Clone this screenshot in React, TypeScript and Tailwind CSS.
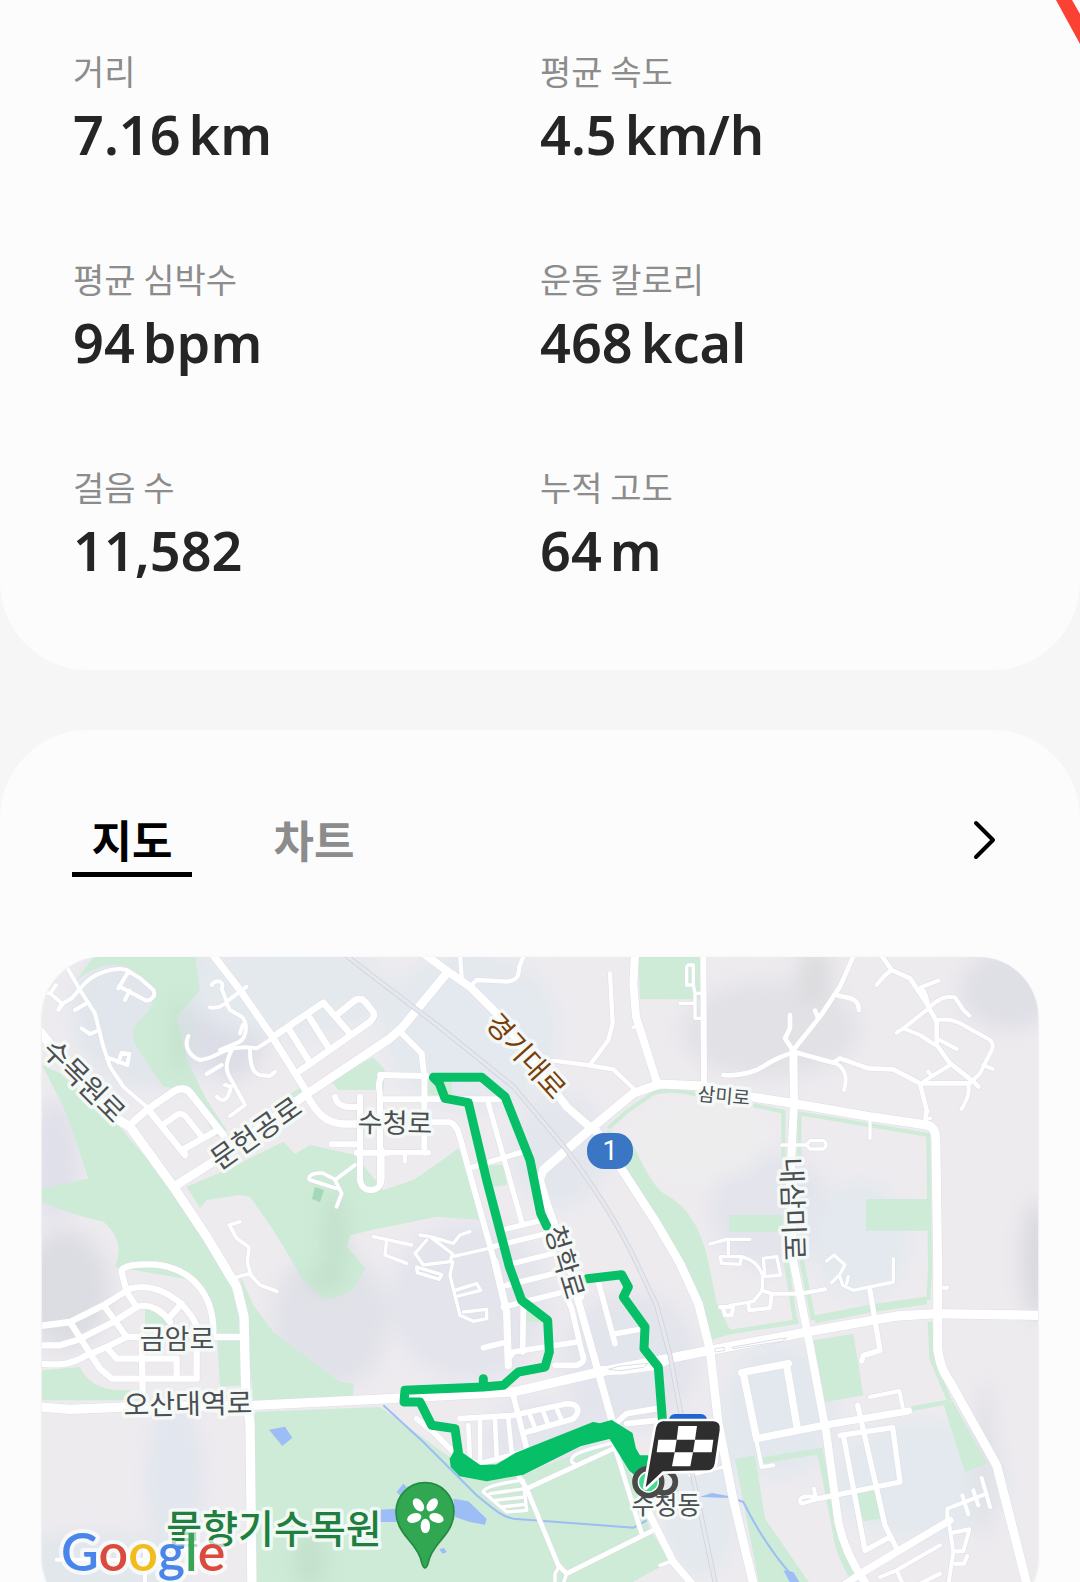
const stats = [
    { id: 1, label: "거리", value: "7.16", unit: "km" },
    { id: 2, label: "평균 속도", value: "4.5", unit: "km/h" },
    { id: 3, label: "평균 심박수", value: "94", unit: "bpm" },
    { id: 4, label: "운동 칼로리", value: "468", unit: "kcal" },
    { id: 5, label: "걸음 수", value: "11,582", unit: "" },
    { id: 6, label: "누적 고도", value: "64", unit: "m" },
]

// each tile has its own origin on the map, paths are in thirds of a pixel
const tiles = [
    {
        id: "nw",
        place: "translate(40 950) scale(0.33333)",
        greens: [
            "M110 90L160 21H465L480 120L410 200L440 330L500 450L560 540L530 560L440 420L370 410L290 290C270 250 280 220 320 190C360 140 340 90 260 50C200 30 150 60 110 90Z",
            "M6 345L60 370L230 520L410 730L500 880L570 1010L225 950C245 900 240 860 190 815L110 795L6 755V718L145 685L110 580L70 470Z",
            "M440 710L560 660L730 575L765 612L810 585L945 615L1030 720L1120 690L1200 635L1255 595L1300 700L1325 810L1190 800L1020 835L930 855L920 890L975 955L950 1000C920 1040 880 1050 850 1042L790 990L760 940L700 840L630 740L600 735L500 750L480 775Z",
            "M1000 322L1035 360L1030 420H895L870 390Z",
            "M745 435L795 405L805 440L770 455Z",
        ],
        strips: [],
        roads: [
            { w: 28, d: "M0 245L60 320L220 500L270 530L400 710L500 860L560 960L590 1010L612 1100L617 1320L630 1420L636 1920" },
            { w: 26, d: "M410 705L520 635L800 432L1050 265L1085 235L1220 70" },
            { w: 22, d: "M515 10L600 120L690 250L800 425M280 515L320 480L400 425C420 412 440 415 450 428L550 555M800 435C830 490 860 520 910 522H950" },
            { w: 20, d: "M700 260L850 158L925 245M780 362L990 215C1005 200 1005 190 995 180L975 155C965 145 950 145 940 155L890 195M745 235L805 330M810 205L870 300M330 485L435 615L430 598L525 545" },
            { w: 18, d: "M375 520L415 492C430 490 440 500 445 510L485 560M885 440C890 465 910 475 960 470V440M875 583H950M960 450V690C965 730 1020 730 1025 690V600M950 608H1045" },
            { w: 12, d: "M80 50L120 120L165 190L190 290L210 350L250 410L320 470M6 130H30L65 160L55 180L70 160L95 145L130 105C160 70 220 50 260 60L300 85L340 120C350 140 330 155 315 150L240 110M30 130L48 105M265 65L235 115M268 122L255 150M105 180L140 160M125 235L150 252L178 240M210 325L235 335L262 345L268 312L245 308L235 338" },
            { w: 12, d: "M515 105C530 85 555 95 545 115L560 155L620 110M510 172C540 180 550 160 560 160L570 180L605 200C625 220 620 260 600 275L540 300M608 225L600 250M445 258C430 290 450 320 480 330C520 325 530 310 560 300C590 290 620 290 650 295L690 270M545 345L500 372M575 300C550 350 560 370 580 400L615 465L570 498M530 440C550 460 565 450 573 410L555 405M630 300C630 350 640 370 660 375L690 378L705 365" },
            { w: 11, d: "M945 645L885 690L905 730L890 770M888 715L810 690C800 680 820 665 850 670L888 690M600 815L568 825L590 865L627 892L622 936L632 975L660 1005L710 1024M632 970L590 981" },
        ],
    },
    {
        id: "n",
        place: "translate(380 950) scale(0.33333)",
        greens: [
            "M775 21H965V148H780Z",
            "M325 645H370L380 705L340 710Z",
            "M145 385H215V435H145Z",
            "M680 540L750 570C780 620 810 700 850 730C930 770 970 850 990 960L1010 1060L1045 1130L1060 1150L995 1170L950 1050L830 820L720 640Z",
        ],
        strips: [{ w: 12, d: "M685 535L740 485L820 430C860 415 920 425 960 435" }],
        roads: [
            { w: 26, d: "M640 530L720 650L830 820L900 940L955 1060L990 1200L1015 1420L1060 1650L1120 1900" },
            { w: 24, d: "M765 10L760 100L768 200L800 300L830 395M130 10L205 65L270 110L350 190L560 470L640 540M490 660L480 690L500 760L540 870L600 1040" },
            { w: 18, d: "M970 10L972 400M60 245L125 310L133 380V608M0 375L140 378M0 448H360M150 517H210C230 525 235 540 250 600L350 960M5 380C-10 400 0 420 0 440V700" },
            { w: 16, d: "M275 652L430 605M325 460L425 815M365 840L510 805M340 890L500 850M400 940L520 910M0 608H145" },
            { w: 13, d: "M240 10L245 80M270 110L290 90L380 95C420 90 415 70 418 50L430 20M690 70L698 220L685 270L630 345M520 332L620 345L700 358L765 420M75 610V635" },
            { w: 10, d: "M925 45H940V105H920V50M940 105L945 130H965M945 130V160H900M945 160V205H965M-20 860L95 885M20 870L15 915L80 940M120 855L150 860L220 880L240 855L270 845M140 870L105 910L130 945L210 935L218 912L150 860M218 920L350 890M775 225L760 232" },
        ],
    },
    {
        id: "ne",
        place: "translate(710 950) scale(0.33333)",
        greens: ["M468 747H655V842H468Z", "M57 795H217V845H57Z"],
        strips: [
            { w: 12, d: "M130 465L220 485V620M268 620V490L655 555L660 960L655 1050" },
            { w: 14, d: "M228 930L255 1110M275 930L310 1110" },
        ],
        roads: [
            { w: 27, d: "M-500 660L-350 530L-230 430L-150 402L-20 408L120 440L260 462L480 500L650 525C680 532 678 560 678 600L683 936V1196C690 1246 700 1266 720 1296L860 1546L950 1900" },
            { w: 24, d: "M250 305L252 460L240 700L250 936L290 1136L350 1456L385 1716C400 1786 430 1850 475 1910" },
            { w: 14, d: "M250 300L330 200L390 110L432 15M245 295L225 265L240 235V195M315 182L325 205M385 137C430 145 445 150 447 180M245 310C200 320 170 345 140 360C100 375 70 378 40 375M250 305L370 338L390 325L475 355L550 358L630 400H775M630 400L650 480L645 520M510 10L545 60L600 85L650 160L680 215V285L720 340L790 395L805 410" },
            { w: 12, d: "M370 338C410 350 412 390 402 420M545 60C515 80 505 100 500 105M685 92L632 112C650 130 655 160 655 180M560 248L580 235L650 180C690 140 710 138 735 142L760 180L778 197M580 235L630 255L675 285M685 268L740 297M680 210C710 205 730 210 750 220L840 270C850 280 850 290 845 300L810 370L775 405C780 430 770 450 755 477M820 345L848 357M720 345L640 395M655 365L665 378" },
            { w: 10, d: "M480 505V565M215 585H290L300 572H340C352 580 350 590 340 597H300L290 585M645 485H655M645 505H662M0 882L50 868H120M55 870V915M30 920H95L90 943L35 940ZM95 920C130 930 150 950 157 975V1021L130 1054L60 1066M160 925L200 920L212 975L165 980ZM350 933L372 915L405 945L388 975L398 1006L430 1021L550 996V926M365 998L388 975M415 980L410 1000" },
        ],
    },
    {
        id: "sw",
        place: "translate(40 1262) scale(0.33333)",
        greens: [
            "M230 0H560L600 150L605 370L540 375L530 200C500 60 420 10 350 5Z",
            "M6 325L120 315C140 360 180 380 230 385H300V415H6Z",
            "M600 40L640 130L700 210L900 360L940 365V405L640 415L620 200Z",
            "M645 450L1020 435L1250 600L1320 650L1440 640L1720 535L1780 650L1830 800L1890 900L1740 980H645Z",
            "M315 140H360L400 190H315Z",
        ],
        strips: [],
        roads: [
            { w: 28, d: "M0 435L90 442L260 435L640 430L1050 410L1420 390L1670 332L2010 265L2300 210L2570 162L2690 155L3000 160" },
            { w: 19, d: "M0 192L90 180L190 130L270 80C350 60 430 110 470 190M260 90L245 30C240 10 300 5 350 8C450 20 520 90 520 210M0 250H60L110 235L220 180L290 135C330 120 370 150 390 180M0 305C60 310 90 310 140 280L200 255L260 225H310M90 180L180 320L215 350H470V270M195 135L260 225M260 90L290 135M205 262L230 290H410V350M305 220L308 400M385 170L425 125M530 225H610" },
            { w: 12, d: "M50 893H330M315 840V960" },
        ],
    },
    {
        id: "s",
        place: "translate(380 1262) scale(0.33333)",
        greens: ["M435 140L500 175V180L440 180Z"],
        strips: [],
        roads: [
            { w: 22, d: "M345 0L380 150L385 310M590 100L655 330L700 490M800 740L880 900L940 970" },
            { w: 26, d: "M650 325L720 325L830 310L870 290" },
            { w: 17, d: "M550 80L575 140L610 290M310 257L380 240M370 135L560 88M380 70L540 30M390 285L400 270L590 240M430 130L428 270M525 310H590C615 300 615 290 605 270M655 60L705 245M705 215L790 200M400 400L440 560M240 470L400 460L560 425C600 425 600 450 580 470L440 510M240 590L300 605L430 570M700 490L740 455L830 440M740 485L830 475M110 470L160 510L240 590" },
            { w: 14, d: "M265 490L270 590M300 475V600M345 475L350 580M385 470L395 570M450 460L468 505M490 450L505 490M530 440L545 475M415 640L440 680L535 910L560 935L830 800M440 680L700 560M700 540L785 815" },
            { w: 10, d: "M525 970V935L540 910M560 935L548 970M590 610L575 600C570 580 590 570 690 545M310 690C310 670 420 655 430 655L440 745L380 750ZM330 695L435 680M345 715L435 705M365 735L435 727M840 910L880 895M930 640L1030 615M110 15L185 38L178 52L112 32ZM218 0L210 40L240 160L280 178L320 170V142L250 150M225 85L290 65L302 85L235 102" },
        ],
    },
    {
        id: "se",
        place: "translate(710 1262) scale(0.33333)",
        greens: [
            "M310 235L430 215L460 400L345 420Z",
            "M75 590L135 580L165 770L310 980H150Z",
            "M700 425L730 420L830 605L765 630Z",
            "M440 690L500 685L510 770L460 778Z",
            "M0 100L20 215L0 225Z",
        ],
        strips: [
            { w: 24, d: "M315 172L480 140L650 115" },
            { w: 14, d: "M30 215L265 178M605 440L715 420M660 180L665 290L720 420" },
            { w: 18, d: "M160 595L330 567L375 800C380 850 400 900 430 950" },
        ],
        roads: [
            { w: 22, d: "M95 332L235 305M100 335L140 530M230 310L262 500M140 530L340 490L595 447M400 970L460 930L560 870L720 775" },
            { w: 16, d: "M480 85L510 265L460 280L455 297M443 430L450 460L500 680L525 790L560 860M390 520L548 497L570 660L325 710M400 520L465 865L540 825" },
            { w: 12, d: "M140 540L155 615L190 610M480 405L568 387L578 435M320 712L275 725C260 710 275 700 320 705M312 680L318 710M345 82L270 95H185L155 85M185 95L180 138L118 145L115 125M30 135H70L65 160H45L40 140M712 770V740L830 695M815 648L840 735M790 685L805 730M757 700L775 757M715 770L730 870L715 970M725 812L778 802L760 868H730M735 905H762L772 882M560 925L690 850M510 945L560 925L580 970M620 970L690 935M690 77H712" },
        ],
    },
]

const relief = [
    { id: 1, cx: 150, cy: 1010, rx: 80, ry: 80, fill: "#e1e6ec" },
    { id: 2, cx: 230, cy: 1020, rx: 40, ry: 60, fill: "#dcdde6" },
    { id: 3, cx: 55, cy: 1160, rx: 25, ry: 60, fill: "#e0e0ea" },
    { id: 4, cx: 65, cy: 1290, rx: 45, ry: 60, fill: "#dcdde3" },
    { id: 5, cx: 290, cy: 990, rx: 100, ry: 50, fill: "#e4e9ee" },
    { id: 6, cx: 470, cy: 1030, rx: 90, ry: 80, fill: "#e3e9ee" },
    { id: 7, cx: 560, cy: 1150, rx: 50, ry: 60, fill: "#e3e7ed" },
    { id: 8, cx: 770, cy: 1030, rx: 90, ry: 50, fill: "#e2e2e6" },
    { id: 9, cx: 815, cy: 975, rx: 18, ry: 30, fill: "#dcdcdf" },
    { id: 10, cx: 1010, cy: 990, rx: 50, ry: 40, fill: "#dfdfe6" },
    { id: 11, cx: 770, cy: 1210, rx: 60, ry: 60, fill: "#e3e4ec" },
    { id: 12, cx: 1038, cy: 1260, rx: 18, ry: 60, fill: "#dadade" },
    { id: 13, cx: 330, cy: 1320, rx: 60, ry: 70, fill: "#e1e2e9" },
    { id: 14, cx: 470, cy: 1300, rx: 80, ry: 80, fill: "#e3e4ec" },
    { id: 15, cx: 175, cy: 1480, rx: 30, ry: 80, fill: "#e2e6ee" },
    { id: 16, cx: 90, cy: 1570, rx: 100, ry: 40, fill: "#e2e7ec" },
    { id: 17, cx: 630, cy: 1360, rx: 70, ry: 70, fill: "#e3e5ec" },
    { id: 18, cx: 780, cy: 1410, rx: 60, ry: 70, fill: "#e3e8ee" },
    { id: 19, cx: 920, cy: 1480, rx: 90, ry: 60, fill: "#e3e9ee" },
    { id: 20, cx: 985, cy: 1460, rx: 10, ry: 80, fill: "#e0e0e5" },
    { id: 21, cx: 700, cy: 1500, rx: 40, ry: 80, fill: "#e3e9ee" },
    { id: 22, cx: 860, cy: 1240, rx: 50, ry: 60, fill: "#e3e9ee" },
    { id: 23, cx: 700, cy: 1140, rx: 70, ry: 40, fill: "#ededee" },
    { id: 24, cx: 540, cy: 1440, rx: 60, ry: 40, fill: "#e4e5ed" },
]

const places = [
    { id: 1, name: "수목원로", place: "translate(84 1081) rotate(45)", look: "fill-[#4b4e53] text-[28px]" },
    { id: 2, name: "문헌공로", place: "translate(256 1133) rotate(-35)", look: "fill-[#4b4e53] text-[28px]" },
    { id: 3, name: "수청로", place: "translate(395 1123) rotate(1)", look: "fill-[#4b4e53] text-[27px]" },
    { id: 4, name: "경기대로", place: "translate(526 1056) rotate(48)", look: "fill-[#7a3d0a] text-[28px]" },
    { id: 5, name: "삼미로", place: "translate(724 1096) rotate(5)", look: "fill-[#4b4e53] text-[19px]" },
    { id: 6, name: "내삼미로", place: "translate(793 1209) rotate(88)", look: "fill-[#4b4e53] text-[28px]" },
    { id: 7, name: "청학로", place: "translate(565 1262) rotate(73)", look: "fill-[#4b4e53] text-[27px]" },
    { id: 8, name: "금암로", place: "translate(177 1339)", look: "fill-[#4b4e53] text-[27px]" },
    { id: 9, name: "오산대역로", place: "translate(188 1404) rotate(-1)", look: "fill-[#4b4e53] text-[28px]" },
    { id: 10, name: "물향기수목원", place: "translate(274 1529)", look: "fill-[#1f7f3f] text-[39px] font-medium" },
]

const Stat = (props : any) => {
    const data = props.data
    return (
        <div className="flex flex-col gap-1">
            <dt className="text-[34px] leading-[46px] text-[#8c8c8c]">{data.label}</dt>
            <dd className="flex flex-row gap-2 font-['Noto_Sans','Noto_Sans_CJK_KR',sans-serif] text-[54px] leading-[72px] font-semibold text-[#252525]">
                <span>{data.value}</span>
                {data.unit && <span>{data.unit}</span>}
            </dd>
        </div>
    );
};

const Route = () => {
    return (
        <g transform="translate(380 950) scale(0.33333)" fill="none" stroke="#06bf66" strokeWidth="27" strokeLinecap="round" strokeLinejoin="round">
            <path d="M500 828L482 790L450 630L375 440L305 382H160L178 400L195 445L265 458L320 690L388 950L425 1051L503 1111L508 1206L495 1251L415 1266L370 1306L310 1311L75 1321L72 1356H120L155 1426L225 1436L235 1506L225 1526" />
            <path d="M622 986L725 974L745 1011L730 1041L795 1131L792 1196L835 1251L848 1420" />
            <path d="M310 1306V1286" />
            <path strokeWidth="6" fill="#06bf66" d="M212 1526L240 1506L300 1548L350 1546L410 1510L640 1419L660 1423L695 1413L755 1451L765 1496L790 1540L780 1586L750 1560L690 1463L600 1486L430 1571L320 1591L240 1576L215 1550Z" />
        </g>
    );
};

const ParkPin = () => {
    return (
        <g transform="translate(380 1262) scale(0.33333)">
            <path d="M135 662C85 662 48 702 48 750C48 785 65 810 85 832C108 858 122 880 126 905Q135 930 144 905C148 880 162 858 185 832C205 810 222 785 222 750C222 702 185 662 135 662Z" fill="#31a751" stroke="#258a43" strokeWidth="5" />
            {
                [0, 72, 144, 216, 288].map((angle : number) => (
                    <ellipse key={angle} cx="136" cy="792" rx="14" ry="22" fill="#fff" transform={`rotate(${angle} 136 757)`} />
                ))
            }
        </g>
    );
};

const FinishFlag = () => {
    return (
        <g transform="translate(380 1262) scale(0.33333)">
            <circle cx="853" cy="660" r="33" fill="#e8ebee" stroke="#4a4a4a" strokeWidth="17" />
            <path d="M780 580H805L815 610L780 615Z" fill="#06bf66" />
            <circle cx="805" cy="660" r="40" fill="#4ad991" stroke="#4a4a4a" strokeWidth="17" />
            <circle cx="805" cy="660" r="30" fill="none" stroke="#fff" strokeWidth="4" />
            <path d="M848 478H1000Q1023 480 1019 504L1004 605Q1000 625 980 625L848 628L797 676L828 498Q832 480 848 478Z" fill="#2e2e2e" stroke="#fff" strokeWidth="16" strokeLinejoin="round" paintOrder="stroke" />
            <path d="M895 492H951L945 533H890ZM835 533H890L884 571H830ZM945 533H1000L995 571H939ZM884 571H939L931 613H876Z" fill="#fff" />
        </g>
    );
};

const RouteMap = () => {
    return (
        <svg viewBox="42 957 996 660" className="block w-full bg-[#eeebef] font-['Noto_Sans_CJK_KR',sans-serif]" role="img" aria-label="지도">
            <filter id="soft" x="-50%" y="-50%" width="200%" height="200%">
                <feGaussianBlur stdDeviation="10" />
            </filter>
            <g filter="url(#soft)">
                {
                    relief.map((item : any) => (
                        <ellipse key={item.id} cx={item.cx} cy={item.cy} rx={item.rx} ry={item.ry} fill={item.fill} />
                    ))
                }
            </g>
            {
                tiles.map((tile : any) => (
                    <g key={tile.id} transform={tile.place} fill="#cdebd6">
                        {tile.greens.map((d : string, index : number) => <path key={index} d={d} />)}
                        {tile.strips.map((strip : any, index : number) => <path key={index} d={strip.d} fill="none" stroke="#cdebd6" strokeWidth={strip.w} />)}
                    </g>
                ))
            }
            <g filter="url(#soft)" fill="#b9d5c5" opacity="0.5">
                <ellipse cx="335" cy="1240" rx="12" ry="50" />
                <ellipse cx="180" cy="1040" rx="8" ry="40" />
                <ellipse cx="310" cy="1560" rx="16" ry="30" />
                <ellipse cx="325" cy="1280" rx="20" ry="12" />
            </g>
            <path d="M312 1199L315 1187L324 1190L320 1202Z" fill="#a5d8b8" />
            <g transform="translate(380 1262) scale(0.33333)" fill="#9cbdf6">
                <path d="M-333 503L-285 494L-263 527L-293 552ZM-30 745L50 740L60 780H0ZM220 710L265 718L320 770L315 788L270 780L225 765ZM50 690L70 665L80 675L60 700ZM178 862L192 858L200 870L188 875ZM960 705L995 693L1050 703L1048 708ZM1210 925L1240 930L1270 980H1240Z" />
                <path d="M10 430L130 540L230 640L290 700C350 750 370 765 400 770L760 797L800 775M1050 705L1090 720C1130 800 1180 880 1240 945" fill="none" stroke="#9cbdf6" strokeWidth="6" />
            </g>
            {
                tiles.map((tile : any) => (
                    <g key={tile.id} transform={tile.place} fill="none" stroke="#dcdee6" strokeLinecap="round" strokeLinejoin="round">
                        {tile.roads.map((road : any, index : number) => <path key={index} d={road.d} strokeWidth={road.w + 3} />)}
                    </g>
                ))
            }
            {
                tiles.map((tile : any) => (
                    <g key={tile.id} transform={tile.place} fill="none" stroke="#fff" strokeLinecap="round" strokeLinejoin="round">
                        {tile.roads.map((road : any, index : number) => <path key={index} d={road.d} strokeWidth={road.w} />)}
                    </g>
                ))
            }
            <g transform="translate(380 950) scale(0.33333)" fill="none">
                <path d="M-110 10L0 95L180 232L400 410L560 600C650 720 730 850 780 960L830 1066L870 1216L900 1376L940 1586L1010 1920" stroke="#d0d3dd" strokeWidth="15" />
                <path d="M-110 10L0 95L180 232L400 410L560 600C650 720 730 850 780 960L830 1066L870 1216L900 1376L940 1586L1010 1920" stroke="#e7e8ed" strokeWidth="10" />
                <path d="M685 1258L720 1248L805 1240L790 1252L720 1262ZM1055 1192L1200 1166L1220 1164L1205 1174L1060 1196ZM1005 1196L1033 1192V1202L1005 1206Z" stroke="#dcdee6" strokeWidth="3" />
            </g>
            <Route />
            <ParkPin />
            <rect x="587" y="1133" width="46" height="36" rx="17" fill="#3b76c5" />
            <text x="610" y="1160" textAnchor="middle" className="fill-white font-['Roboto'] text-[27px]">1</text>
            <rect x="669" y="1414" width="38" height="20" rx="6" fill="#1f66d0" />
            {
                places.map((item : any) => (
                    <text key={item.id} transform={item.place} dy="0.36em" textAnchor="middle" stroke="#f6fbf8" strokeOpacity="0.9" strokeWidth="7" strokeLinejoin="round" paintOrder="stroke" className={item.look}>{item.name}</text>
                ))
            }
            <text x="666" y="1514" textAnchor="middle" stroke="#f6fbf8" strokeWidth="6" strokeLinejoin="round" paintOrder="stroke" className="fill-[#4b4e53] text-[25px]">수청동</text>
            <FinishFlag />
            <text x="61" y="1571" stroke="#fff" strokeOpacity="0.7" strokeWidth="8" strokeLinejoin="round" paintOrder="stroke" className="font-['Lato'] text-[52px] font-semibold">
                <tspan fill="#4a86ea">G</tspan>
                <tspan fill="#db4a3e">o</tspan>
                <tspan fill="#f3bc1d">o</tspan>
                <tspan fill="#4a86ea">g</tspan>
                <tspan fill="#37a456">l</tspan>
                <tspan fill="#db4a3e">e</tspan>
            </text>
        </svg>
    );
};

const App = () => {
    return (
        <main className="h-screen w-full overflow-hidden flex flex-col gap-y-[60px] bg-[#f6f6f6] font-['Noto_Sans_CJK_KR',sans-serif]">
            <section className="relative w-full shrink-0 bg-[#fcfcfc] rounded-b-[88px] px-[73px] pt-12 pb-[84px]">
                <svg viewBox="0 0 24 44" className="absolute top-0 right-0 w-6 h-11" aria-hidden="true">
                    <path d="M0 0H16L24 14V44Z" fill="#fb4034" />
                </svg>
                <dl className="grid grid-cols-2 gap-y-[86px]">
                    {
                        stats.map((item : any) => (
                            <Stat key={item.id} data={item} />
                        ))
                    }
                </dl>
            </section>
            <section className="w-full shrink-0 bg-[#fcfcfc] rounded-t-[88px] pt-20">
                <div className="flex flex-row items-start justify-between px-[72px] mb-20">
                    <div className="flex flex-row gap-x-[62px]" role="tablist">
                        <button type="button" role="tab" aria-selected="true" className="w-[120px] pb-1 border-b-[5px] border-black text-[44px] leading-[58px] font-bold text-black">지도</button>
                        <button type="button" role="tab" aria-selected="false" className="w-[120px] pb-1 border-b-[5px] border-transparent text-[44px] leading-[58px] font-bold text-[#8c8c8c]">차트</button>
                    </div>
                    <button type="button" aria-label="자세히" className="w-12 h-[60px] flex justify-center items-center">
                        <svg viewBox="0 0 24 40" className="w-6 h-10" fill="none" stroke="#000" strokeWidth="4" strokeLinecap="round" strokeLinejoin="round">
                            <path d="M4 3L21 20L4 37" />
                        </svg>
                    </button>
                </div>
                <div className="mx-[42px] rounded-[60px] overflow-hidden shadow-sm">
                    <RouteMap />
                </div>
            </section>
        </main>
    );
};

export default App;
